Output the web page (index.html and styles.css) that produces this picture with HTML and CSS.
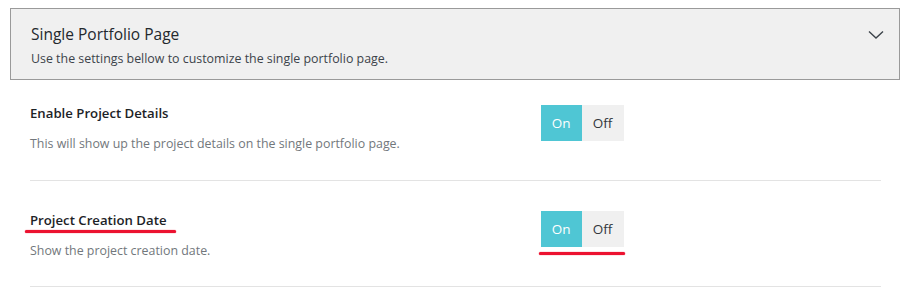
FILE: index.html
```html
<!DOCTYPE html>
<html lang="en">
<head>
  <meta charset="UTF-8" />
  <meta name="viewport" content="width=device-width, initial-scale=1" />
  <title>Single Portfolio Page - Settings</title>
  <link rel="stylesheet" href="styles.css">
</head>
<body>

<div class="panel">
  <div class="panel-head">
    <div>
      <h2 class="panel-title">Single Portfolio Page</h2>
      <p class="panel-desc">Use the settings bellow to customize the single portfolio page.</p>
    </div>
    <svg class="chevron" width="16" height="10" viewBox="0 0 16 10">
      <path d="M1 1.5 L8 8 L15 1.5" fill="none" stroke="#3c434a" stroke-width="1.4" />
    </svg>
  </div>

  <div class="settings">
    <div class="row">
      <div class="label">
        <span class="row-title">Enable Project Details</span>
        <p class="row-desc">This will show up the project details on the single portfolio page.</p>
      </div>
      <div class="control">
        <div class="switch">
          <button class="on active">On</button>
          <button class="off">Off</button>
        </div>
      </div>
    </div>

    <div class="row">
      <div class="label">
        <span class="row-title marked">Project Creation Date</span>
        <p class="row-desc">Show the project creation date.</p>
      </div>
      <div class="control">
        <div class="switch marked">
          <button class="on active">On</button>
          <button class="off">Off</button>
        </div>
      </div>
    </div>
  </div>
</div>

</body>
</html>
```

FILE: styles.css
```css
body {
  font-family: "Open Sans", "Noto Sans", Arial, sans-serif;
  background: #fff;
  color: #23282d;
  margin: 0;
  padding: 8px 8px 0 10px;
}
.panel-head {
  display: flex;
  justify-content: space-between;
  align-items: flex-start;
  background: #f0f0f0;
  border: 1px solid #9a9a9a;
  padding: 14px 15px 10px 20px;
}
.panel-title {
  margin: 0;
  font-size: 15.5px;
  line-height: 22px;
  font-weight: 500;
  color: #23282d;
}
.panel-desc {
  margin: 4px 0 0;
  font-size: 12.4px;
  line-height: 20px;
  color: #3c434a;
}
.chevron {
  margin-top: 7px;
}
.settings {
  padding: 0 19px 0 20px;
}
.row {
  display: grid;
  grid-template-columns: 60% 40%;
  padding: 29px 0 25px;
  border-bottom: 1px solid #e3e3e3;
}
.row:first-child {
  padding-top: 23px;
  padding-bottom: 26px;
}
.label {
  line-height: 20px;
}
.row-title {
  display: block;
  width: fit-content;
  position: relative;
  font-size: 13.2px;
  line-height: 20px;
  font-weight: 600;
  color: #1d2327;
}
.row-desc {
  margin: 11px 0 0;
  font-size: 12.4px;
  line-height: 20px;
  color: #72777c;
}
.switch {
  display: inline-flex;
  position: relative;
  margin-top: 2px;
}
.row + .row .switch {
  margin-top: 1px;
}
.switch button {
  height: 36px;
  border: none;
  padding: 0;
  font-family: inherit;
  font-size: 13.5px;
  cursor: pointer;
  background: #f0f0f0;
  color: #32373c;
}
.switch .on {
  width: 41px;
}
.switch .off {
  width: 42px;
}
.switch button.active {
  background: #4fc6d4;
  color: #fff;
}
/* red hand-drawn marks */
.marked::after {
  content: "";
  position: absolute;
  height: 3px;
  border-radius: 2px;
  background: #ec1230;
  box-shadow: 0 0 1px #ec1230;
}
.row-title.marked::after {
  left: -5px;
  right: -9px;
  top: 20px;
}
.switch.marked::after {
  left: -2px;
  right: -1px;
  top: 41px;
}
```
